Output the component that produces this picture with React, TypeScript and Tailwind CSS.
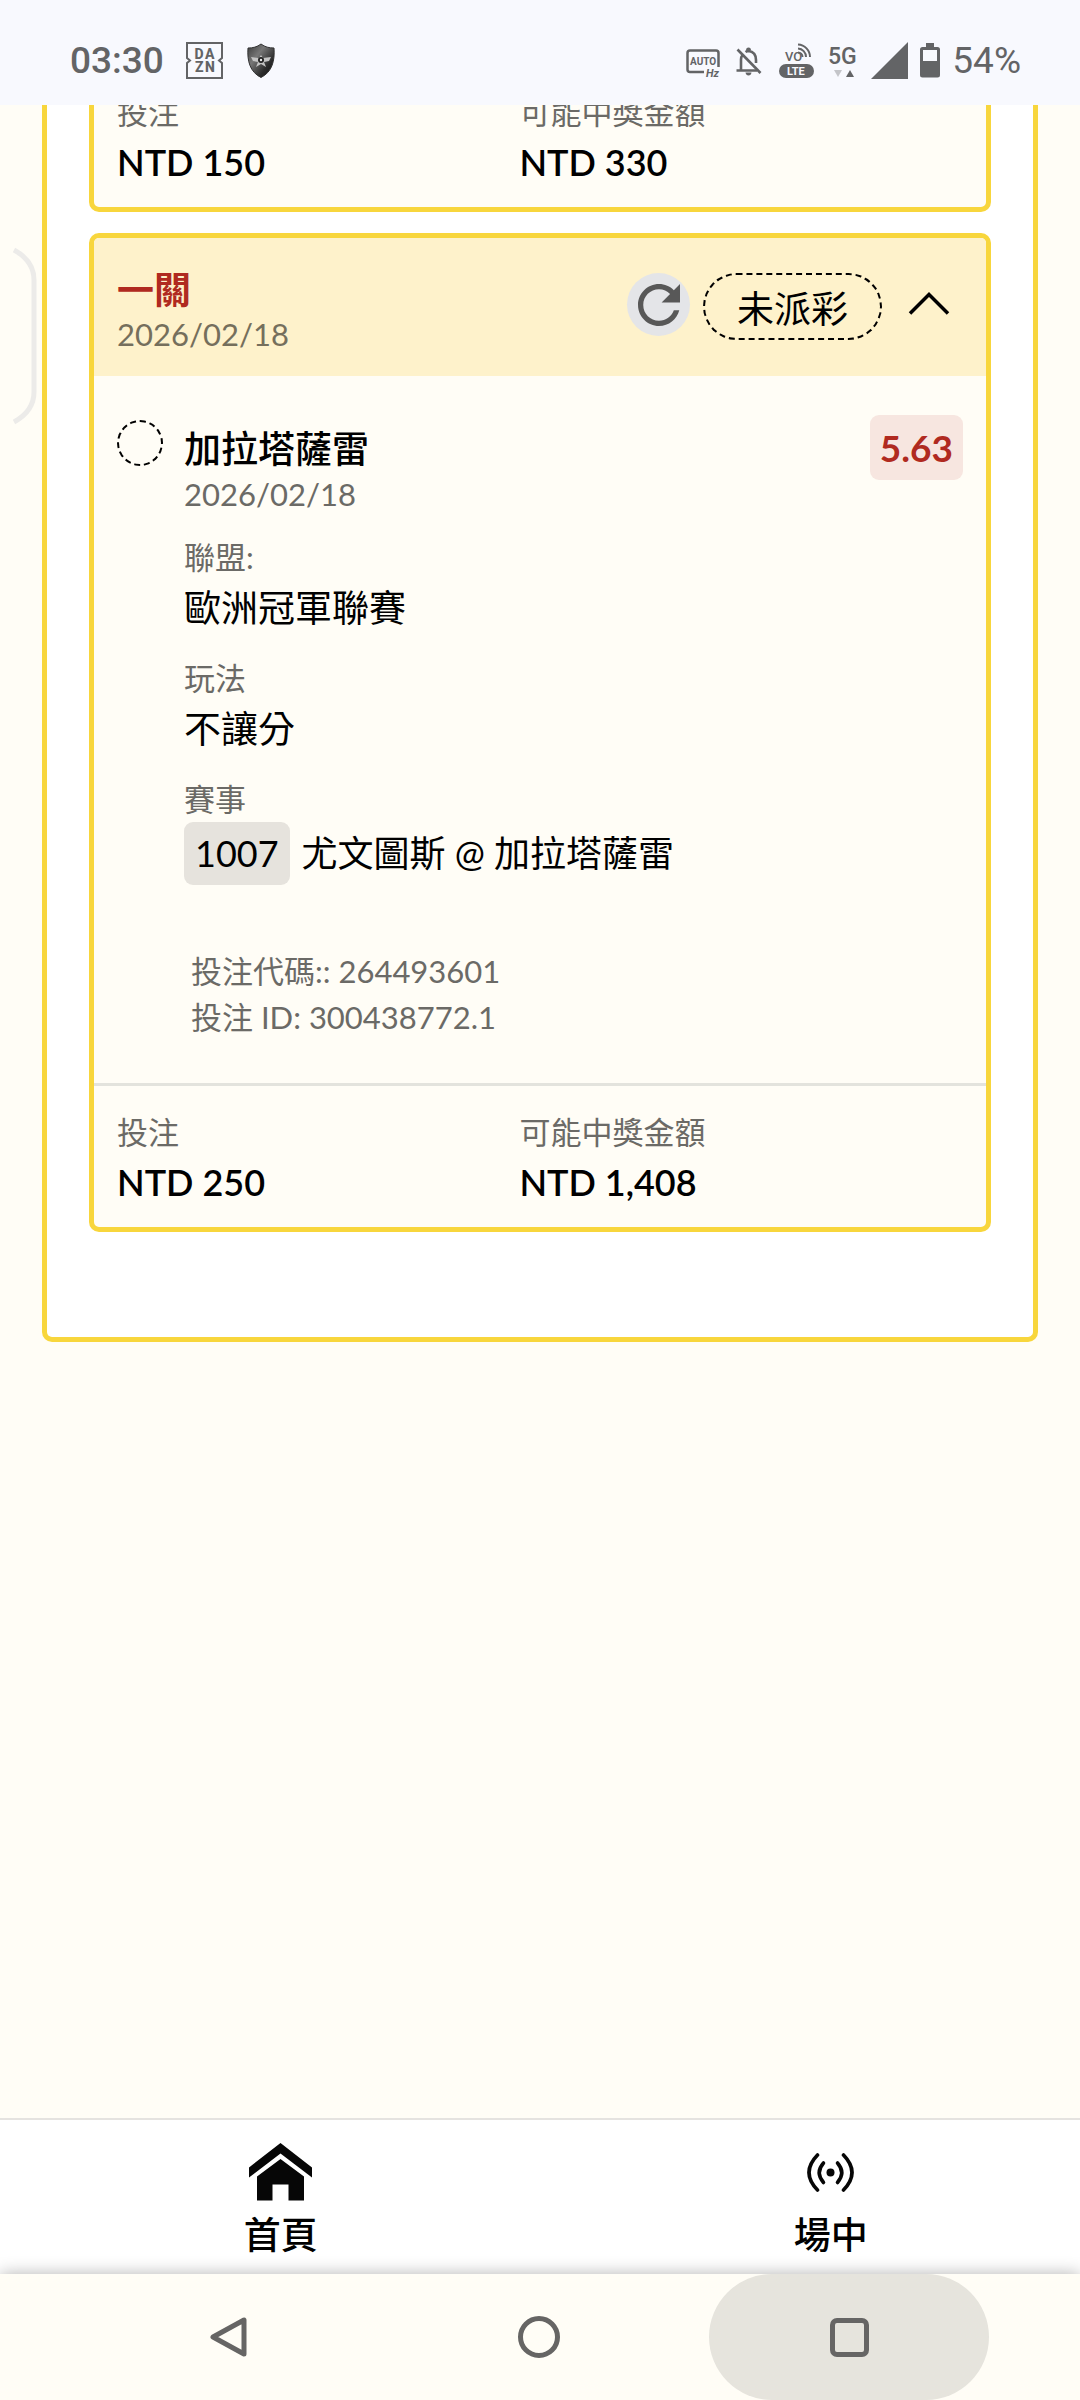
import { useState } from "react";
import type { ReactNode } from "react";

interface Bet {
  stake: string;
  payout: string;
}

// Status bar icons and clock
function StatusBar() {
  return (
    <header className="relative z-10 flex h-[105px] shrink-0 items-center justify-between bg-[#f8f9fe] pt-4 pr-[59px] pl-[70px] font-['Roboto','Liberation_Sans',sans-serif] text-[37px] leading-10 text-[#636466]">
      <div className="flex items-center">
        <time className="font-medium">03:30</time>
        <svg className="ml-[22px]" width="37" height="37" viewBox="0 0 37 37" fill="none" stroke="currentColor" strokeWidth="2">
          <path d="M1 1H36V16L33 18.500L36 21V36H1V21L4 18.500L1 16Z" />
          <g fill="currentColor" stroke="none" fontFamily="Roboto" fontWeight="800" fontSize="14">
            <text x="8.500" y="17">D</text>
            <text x="19" y="17">A</text>
            <text x="9" y="30">Z</text>
            <text x="19" y="30">N</text>
          </g>
        </svg>
        <svg className="ml-6" width="29" height="35" viewBox="0 0 29 35">
          <defs>
            <linearGradient id="shield" x1="0" y1="0" x2="1" y2="1">
              <stop offset="0" stopColor="#3a3a3a" />
              <stop offset="0.350" stopColor="#777" />
              <stop offset="0.700" stopColor="#2c2c2c" />
              <stop offset="1" stopColor="#111" />
            </linearGradient>
          </defs>
          <path d="M14 1C10 4 6 5 1 5C0 18 3 29 14 34.500C25 29 28 18 27 5C22 5 18 4 14 1Z" fill="url(#shield)" stroke="#333" />
          <path d="M4 14L12 15L14 12L16 15L24 14L22 18L17 19L19 24L14 21L9 24L11 19L6 18Z" fill="#c4c4c4" />
          <circle cx="14" cy="17" r="3" fill="#222" />
          <circle cx="14" cy="17" r="1.200" fill="#eee" />
        </svg>
      </div>

      <div className="flex items-center gap-3">
        <svg width="38" height="36" viewBox="0 0 38 36" fill="none" stroke="currentColor" strokeWidth="2.500">
          <path d="M19 29H5Q2.500 29 2.500 26.500V10Q2.500 7.500 5 7.500H31Q33.500 7.500 33.500 10V24" />
          <g fill="currentColor" stroke="none" fontFamily="Roboto" fontWeight="700">
            <text x="5" y="22" fontSize="10">AUTO</text>
            <text x="21" y="34" fontSize="11" fontStyle="italic">Hz</text>
          </g>
        </svg>
        <svg width="32" height="36" viewBox="0 0 32 36" fill="none" stroke="currentColor" strokeWidth="2.600">
          <path d="M2.500 6.500L25.500 30" />
          <path d="M1.500 27.500H22M6 27V16.500Q6 14 7.500 12M10.500 9Q12 8 13.500 8Q21 9 21 17V20" />
          <path d="M11 7.500Q11 4.500 13.500 4.500Q16 4.500 16 7.500Z" fill="currentColor" stroke="none" />
          <path d="M10.500 29.500H16.500Q16 32.500 13.500 32.500Q11 32.500 10.500 29.500Z" fill="currentColor" stroke="none" />
        </svg>
        <svg width="37" height="36" viewBox="0 0 37 36" fill="none" stroke="currentColor" strokeWidth="2">
          <path d="M19 1.500A12.500 12.500 0 0 1 31 14M19 5.500A8.500 8.500 0 0 1 27 14M19 9.500A4.500 4.500 0 0 1 23.500 14" />
          <rect x="0" y="21" width="35" height="14" rx="7" fill="currentColor" stroke="none" />
          <g fill="currentColor" stroke="none" fontFamily="Roboto">
            <text x="6" y="18" fontSize="13" fontWeight="500">VO</text>
            <text x="8" y="32" fontSize="11" fontWeight="700" fill="#f8f9fe">LTE</text>
          </g>
        </svg>
        <svg width="31" height="36" viewBox="0 0 31 36" fill="currentColor">
          <text x="0" y="21" fontFamily="Roboto" fontSize="23" fontWeight="500">5G</text>
          <path d="M6 27H14L10 34Z" opacity="0.350" />
          <path d="M18 34H26L22 27Z" />
        </svg>
        <svg width="37" height="37" viewBox="0 0 37 37" fill="currentColor">
          <path d="M37 0V37H0Z" />
        </svg>
        <svg width="20" height="35" viewBox="0 0 20 35" fill="currentColor">
          <path fillRule="evenodd" d="M6 0H14V4H17.500Q20 4 20 6.500V32Q20 34.500 17.500 34.500H2.500Q0 34.500 0 32V6.500Q0 4 2.500 4H6ZM3 7V18H17V7Z" />
        </svg>
        <span>54%</span>
      </div>
    </header>
  );
}

function Totals({ stake, payout }: Bet) {
  return (
    <dl className="flex h-[141px] pt-[23px]">
      <div className="w-[45%] pl-[23px]">
        <dt className="text-[31px] leading-[46px] text-[#6b6a66]">投注</dt>
        <dd className="text-[36px] leading-[54px] font-semibold">{stake}</dd>
      </div>
      <div className="pl-6">
        <dt className="text-[31px] leading-[46px] text-[#6b6a66]">可能中獎金額</dt>
        <dd className="text-[36px] leading-[54px] font-semibold">{payout}</dd>
      </div>
    </dl>
  );
}

function Field({ label, children }: { label: string; children: ReactNode }) {
  return (
    <div className="mb-5">
      <dt className="text-[31px] leading-[46px] text-[#6b6a66]">{label}</dt>
      <dd className="text-[37px] leading-[55px]">{children}</dd>
    </div>
  );
}

function BetCard({ stake, payout }: Bet) {
  const [open, setOpen] = useState(true);

  return (
    <article className="mt-[21px] overflow-hidden rounded-[10px] border-5 border-[#f8d63c] bg-[#fffdf6]">
      <div className="flex h-[138px] items-start justify-between bg-[#fef2cb] px-[23px] pt-[31px]">
        <div>
          <h2 className="text-[37px] leading-[42px] font-bold text-[#b02a20]">一關</h2>
          <p className="text-[31px] leading-[46px] text-[#756f5c]">2026/02/18</p>
        </div>
        <div className="mt-1 flex items-start gap-[13px]">
          <button type="button" aria-label="重新整理" className="flex size-[63px] items-center justify-center rounded-full bg-[#e4e5e8]">
            <svg width="42" height="42" viewBox="4 4 16 16" fill="#585858">
              <path d="M17.650 6.350C16.200 4.900 14.210 4 12 4c-4.420 0-7.990 3.580-7.990 8s3.570 8 7.990 8c3.730 0 6.840-2.550 7.730-6h-2.080c-.82 2.330-3.040 4-5.650 4-3.310 0-6-2.690-6-6s2.690-6 6-6c1.660 0 3.140.69 4.220 1.780L13 11h7V4l-2.350 2.350z" />
            </svg>
          </button>
          <span className="rounded-full border-2 border-dashed border-black px-8 pt-[6px] pb-[2px] text-[37px] leading-[55px]">未派彩</span>
          <button
            type="button"
            aria-label="展開或收合"
            aria-expanded={open}
            onClick={() => setOpen(!open)}
            className="flex h-[63px] w-[68px] items-center justify-center"
          >
            <svg className={open ? "" : "rotate-180"} width="42" height="42" viewBox="0 0 42 42" fill="none" stroke="black" strokeWidth="3.500">
              <path d="M2 29.500L21 10.500L40 29.500" />
            </svg>
          </button>
        </div>
      </div>

      {open && (
        <div className="flex items-start gap-[21px] border-b-3 border-[#e3e3dd] px-[23px] pt-[39px] pb-[43px]">
          <span className="mt-[5px] size-[46px] shrink-0 rounded-full border-2 border-dashed border-black" />
          <div className="flex-1">
            <h3 className="mt-3 text-[37px] leading-[44px] font-medium">加拉塔薩雷</h3>
            <p className="mb-[17px] text-[31px] leading-[46px] text-[#6b6a66]">2026/02/18</p>
            <dl>
              <Field label="聯盟:">歐洲冠軍聯賽</Field>
              <Field label="玩法">不讓分</Field>
              <Field label="賽事">
                <div className="flex items-center gap-3 text-[36px]">
                  <span className="rounded-[9px] bg-[#e6e3dd] px-[11px] py-1">1007</span>
                  <span>尤文圖斯 @ 加拉塔薩雷</span>
                </div>
              </Field>
            </dl>
            <div className="mt-[63px] pl-[7px] text-[31px] leading-[46px] text-[#6b6a66]">
              <p>投注代碼:: 264493601</p>
              <p>投注 ID: 300438772.1</p>
            </div>
          </div>
          <strong className="rounded-[9px] bg-[#f7e6e0] px-[10px] py-[5px] text-[37px] leading-[55px] font-bold text-[#b02a20]">5.63</strong>
        </div>
      )}
      <Totals stake={stake} payout={payout} />
    </article>
  );
}

function TabBar() {
  return (
    <nav className="grid h-[156px] shrink-0 grid-cols-[52%_48%] border-t-2 border-[#e5e3e0] bg-white text-[37px] leading-[55px] font-medium">
      <a href="#home" className="flex flex-col items-center pt-[23px]">
        <svg width="63" height="58" viewBox="0 0 63 58" fill="#060606">
          <path d="M31.500 0L63 24.500V34.500L31.500 10.500L0 34.500V24.500Z" />
          <path d="M31.500 16L55 33.500V57.500H39.500V41.500H23.500V57.500H8V33.500Z" />
        </svg>
        <span className="mt-[6px]">首頁</span>
      </a>
      <a href="#live" className="flex flex-col items-center pt-[23px] pl-5">
        <svg width="63" height="58" viewBox="0 0 63 58" fill="none" stroke="#060606" strokeWidth="3.600" strokeLinecap="round">
          <circle cx="31.500" cy="29.500" r="4" fill="#060606" stroke="none" />
          <path d="M24.500 20Q16 29.500 24.500 39.500M38.500 20Q47 29.500 38.500 39.500" />
          <path d="M18.500 12Q1.500 29.500 18.500 47M44.500 12Q61.500 29.500 44.500 47" />
        </svg>
        <span className="mt-[6px]">場中</span>
      </a>
    </nav>
  );
}

// Android navigation keys
function SystemNav() {
  return (
    <div className="relative flex h-[126px] shrink-0 justify-center gap-[30px] bg-[#fffdf6] pr-[2px] shadow-[0_0_16px_rgba(0,0,0,0.3)]">
      <button type="button" aria-label="返回" className="flex w-[280px] items-center justify-center">
        <svg width="42" height="42" viewBox="0 0 42 42" fill="none" stroke="#666564" strokeWidth="5" strokeLinejoin="round">
          <path d="M36 4V38L5 21Z" />
        </svg>
      </button>
      <button type="button" aria-label="主畫面" className="flex w-[280px] items-center justify-center">
        <span className="size-[42px] rounded-full border-5 border-[#666564]" />
      </button>
      <button type="button" aria-label="最近使用" className="flex w-[280px] items-center justify-center rounded-full bg-[#e6e4dd]">
        <span className="size-[39px] rounded-[7px] border-5 border-[#666564]" />
      </button>
    </div>
  );
}

export default function App() {
  return (
    <div className="relative flex min-h-screen flex-col bg-[#fffdf6] font-['Lato','Noto_Sans_CJK_TC',sans-serif] text-black">
      <StatusBar />
      <main className="flex-1 overflow-hidden px-[42px]">
        {/* The list is scrolled, so its first card runs under the status bar */}
        <section className="-mt-12 rounded-b-[10px] border-5 border-t-0 border-[#f8d63c] bg-white px-[42px] pt-1 pb-[105px]">
          <article className="rounded-[10px] border-5 border-[#f8d63c] bg-[#fffdf6]">
            <Totals stake="NTD 150" payout="NTD 330" />
          </article>
          <BetCard stake="NTD 250" payout="NTD 1,408" />
        </section>
      </main>

      {/* Edge panel handle */}
      <svg className="absolute top-[246px] left-3" width="26" height="180" viewBox="0 0 26 180" fill="none" stroke="#ecebe9" strokeWidth="5">
        <path d="M2 4Q22 15 22 34V146Q22 165 2 176" />
      </svg>

      <TabBar />
      <SystemNav />
    </div>
  );
}
